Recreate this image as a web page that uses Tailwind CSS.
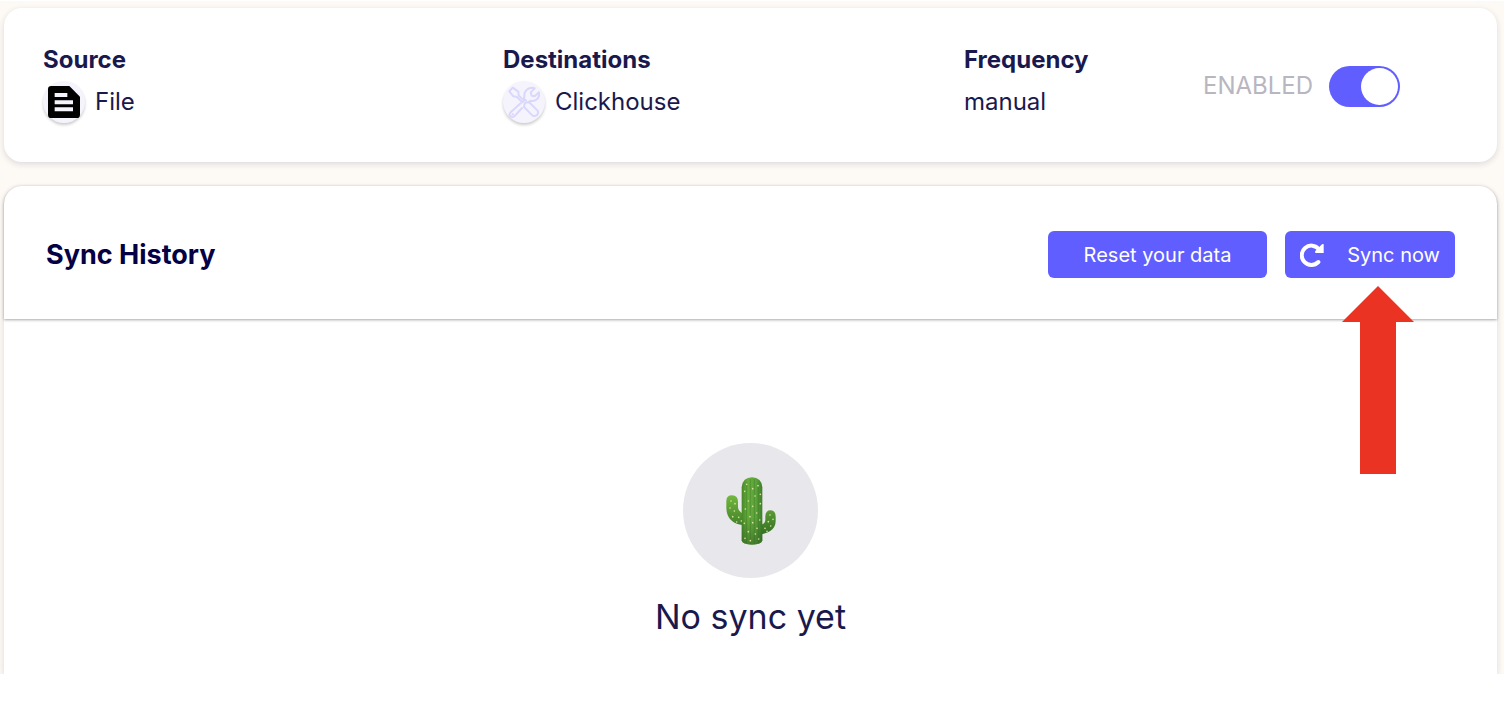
<!DOCTYPE html>
<html lang="en">
<head>
<meta charset="utf-8">
<meta name="viewport" content="width=device-width, initial-scale=1">
<title>Connection status</title>
<script src="https://cdn.jsdelivr.net/npm/@tailwindcss/browser@4"></script>
</head>
<body class="bg-white pt-px font-['Inter',sans-serif] text-[#1a194d]">
<main class="flex flex-col gap-6 bg-[#fdf9f4] pt-[7px] pr-[7px] pl-1">
  <section class="grid grid-cols-[460fr_461fr_239fr_255fr] rounded-[18px] bg-white px-[39px] pt-[37px] pb-[39px] shadow-[0_2px_6px_rgba(26,25,77,0.14)]">
    <div class="flex flex-col gap-[6px]">
      <h2 class="text-2xl leading-[30px] font-bold">Source</h2>
      <div class="flex items-center gap-[10px] text-2xl leading-[42px]">
        <span class="flex size-[42px] items-center justify-center rounded-full bg-[#f5f4fd] shadow-[0_2px_3px_rgba(0,0,0,0.2)]">
          <svg class="size-8" viewBox="0 0 96 96" aria-hidden="true"><path d="M10 0H64L96 32V86Q96 96 86 96H10Q0 96 0 86V10Q0 0 10 0Z" fill="#000"/><path d="M20 21H58V33H20ZM20 43H75V55H20ZM20 64H75V76H20Z" fill="#f5f4fd"/></svg>
        </span>
        <span>File</span>
      </div>
    </div>
    <div class="flex flex-col gap-[6px]">
      <h2 class="text-2xl leading-[30px] font-bold">Destinations</h2>
      <div class="flex items-center gap-[10px] text-2xl leading-[42px]">
        <span class="flex size-[42px] items-center justify-center rounded-full bg-[#f5f4fd] shadow-[0_2px_3px_rgba(0,0,0,0.2)]">
          <svg class="size-8" viewBox="0 0 96 96" fill="none" stroke="#d9d7fb" stroke-width="6" stroke-linejoin="round" stroke-linecap="round" aria-hidden="true"><path d="M4 16L14 5L31 17L32 28L48 44L43 49L27 33L16 31Z"/><path d="M52 50L63 48L88 73Q93 80 87 87Q80 93 73 88L48 63L50 52Z"/><path d="M38 52L8 79Q1 86 8 91Q14 96 21 89L42 66M14 85H15M54 44L48 38L50 20Q56 8 67 6Q74 4 80 7L68 19L71 29L80 31L93 19Q96 30 87 40Q78 47 67 44L62 49"/></svg>
        </span>
        <span>Clickhouse</span>
      </div>
    </div>
    <div class="flex flex-col gap-[6px]">
      <h2 class="text-2xl leading-[30px] font-bold">Frequency</h2>
      <p class="text-2xl leading-[42px]">manual</p>
    </div>
    <label class="flex items-center gap-4 pt-1 text-2xl text-[#b7b6c1]">
      <span>ENABLED</span>
      <input type="checkbox" role="switch" checked class="flex h-[41px] w-[71px] shrink-0 appearance-none items-center rounded-full bg-[#c4c4cf] px-[2px] before:size-[37px] before:rounded-full before:bg-white checked:justify-end checked:bg-[#615eff]">
    </label>
  </section>

  <section class="rounded-t-[18px] bg-white shadow-[0_2px_6px_rgba(26,25,77,0.14)]">
    <header class="flex items-center justify-between rounded-t-[18px] pt-[45px] pr-[42px] pb-[41px] pl-[42px] shadow-[0_1px_3px_rgba(0,0,0,0.35)]">
      <h1 class="text-[27px] leading-[46px] font-bold text-[#040045]">Sync History</h1>
      <div class="flex gap-[18px]">
        <button type="button" class="h-[47px] w-[219px] rounded-md bg-[#615eff] text-xl text-white">Reset your data</button>
        <div class="relative">
          <button type="button" class="flex h-[47px] w-[170px] items-center justify-between rounded-md bg-[#615eff] px-[15px] text-xl text-white">
            <svg class="size-6" viewBox="0 0 72 72" aria-hidden="true"><path d="M57 19A29 29 0 1 0 55 57" fill="none" stroke="#fff" stroke-width="12" stroke-linecap="round"/><path d="M71 4V30H47Q43 28 46 24L66 4Q69 2 71 4Z" fill="#fff"/></svg>
            <span>Sync now</span>
          </button>
          <svg class="absolute top-[55px] left-[57px] h-[188px] w-[72px]" viewBox="0 0 72 188" aria-hidden="true"><path d="M36 0L72 36H54V188H18V36H0Z" fill="#ea3323"/></svg>
        </div>
      </div>
    </header>
    <div class="flex flex-col items-center gap-[17px] pt-[124px] pb-9">
      <div class="flex size-[135px] items-center justify-center rounded-full bg-[#e8e7ec]">
        <svg class="h-[68px] w-[50px]" viewBox="0 0 150 204" aria-hidden="true">
          <defs>
            <linearGradient id="stem"><stop offset="0" stop-color="#468728"/><stop offset=".3" stop-color="#67ad3d"/><stop offset=".7" stop-color="#5ca33b"/><stop offset="1" stop-color="#3f7e29"/></linearGradient>
            <linearGradient id="arm" x2="0" y2="1"><stop offset="0" stop-color="#71b83f"/><stop offset="1" stop-color="#356f23"/></linearGradient>
            <linearGradient id="shade" x2="0" y2="1"><stop offset=".6" stop-color="#28561c" stop-opacity="0"/><stop offset="1" stop-color="#28561c" stop-opacity=".5"/></linearGradient>
          </defs>
          <path d="M18 55Q36 55 36 75V91Q37 104 56 113V145Q1 140 1 91V72Q1 55 18 55ZM134 100Q149 101 149 119V133Q148 166 99 173V143Q117 143 118 129V117Q119 100 134 100Z" fill="url(#arm)"/>
          <path d="M47 31Q50 1 78 1Q107 2 109 31V190Q107 203 78 203Q49 203 47 190Z" fill="url(#stem)"/>
          <path d="M62 16V199M73 7V202M85 7V202M97 18V199" stroke="#397623" stroke-width="2" opacity=".6"/>
          <path d="M47 31Q50 1 78 1Q107 2 109 31V190Q107 203 78 203Q49 203 47 190Z" fill="url(#shade)"/>
          <path d="M62 22h.1M80 35h.1M96 26h.1M56 43h.1M87 57h.1M67 72h.1M103 52h.1M80 88h.1M103 80h.1M58 96h.1M92 108h.1M72 119h.1M101 129h.1M55 139h.1M80 137h.1M93 154h.1M67 164h.1M88 171h.1M57 184h.1M73 191h.1M98 186h.1M15 72h.1M27 80h.1M12 93h.1M25 102h.1M20 119h.1M38 121h.1M46 132h.1M32 135h.1M132 114h.1M141 127h.1M127 134h.1M134 147h.1M117 154h.1M123 163h.1" stroke="#d8dfa0" stroke-width="5" stroke-linecap="round"/>
        </svg>
      </div>
      <p class="text-[34px] leading-[43px]">No sync yet</p>
    </div>
  </section>
</main>
</body>
</html>
